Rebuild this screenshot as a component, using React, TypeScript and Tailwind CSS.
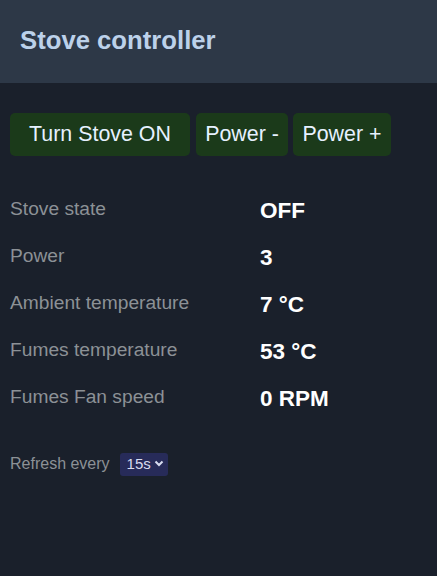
import React, { useState } from "react";

const ROWS = [
  { label: "Stove state", value: "OFF" },
  { label: "Power", value: "3" },
  { label: "Ambient temperature", value: "7 °C" },
  { label: "Fumes temperature", value: "53 °C" },
  { label: "Fumes Fan speed", value: "0 RPM" },
];

const font = { fontFamily: '"Liberation Sans", Arial, sans-serif' };

const App = () => {
  const [refresh, setRefresh] = useState("15s");

  return (
    <div className="min-h-[576px] w-full bg-[#1a202b]" style={font}>
      <header className="h-[83px] flex items-center px-5 bg-[#2d3847]">
        <h1 className="text-[25.7px] font-bold text-[#bcd1ea] leading-none -mt-[1px]">Stove controller</h1>
      </header>

      <main className="px-[10px]">
        <div className="flex mt-[30px]">
          <button className="h-[43px] w-[180px] rounded-[5px] bg-[#1b3a1a] text-[21.4px] text-[#e6f1ff]">
            Turn Stove ON
          </button>
          <button className="ml-[6px] h-[43px] w-[92px] rounded-[5px] bg-[#1b3a1a] text-[21.4px] text-[#e6f1ff]">
            Power -
          </button>
          <button className="ml-[5px] h-[43px] w-[98px] rounded-[5px] bg-[#1b3a1a] text-[21.4px] text-[#e6f1ff]">
            Power +
          </button>
        </div>

        <div className="mt-[31px]">
          {ROWS.map(({ label, value }) => (
            <div key={label} className="grid grid-cols-[250px_1fr] items-center h-[47px]">
              <span className="text-[19.2px] text-[#8c9196] -mt-[2px]">{label}</span>
              <span className="text-[22.5px] font-bold text-white">{value}</span>
            </div>
          ))}
        </div>

        <div className="flex items-center gap-[10px] mt-[30px]">
          <span className="text-[16px] text-[#8c9196] -mt-[1px]">Refresh every</span>
          <div className="relative">
            <select
              value={refresh}
              onChange={(e) => setRefresh(e.target.value)}
              className="appearance-none h-[23px] w-[48px] rounded-[3px] bg-[#272b59] text-[15px] text-[#d8dcf0] pl-[7px] outline-none"
            >
              <option value="5s">5s</option>
              <option value="15s">15s</option>
              <option value="30s">30s</option>
              <option value="60s">60s</option>
            </select>
            <svg
              className="absolute right-[4px] top-[8px] pointer-events-none"
              width="10"
              height="7"
              viewBox="0 0 10 7"
            >
              <path d="M1.5 1.5 L5 5 L8.5 1.5" stroke="#d8dcf0" strokeWidth="2" fill="none" />
            </svg>
          </div>
        </div>
      </main>
    </div>
  );
};

export default App;
